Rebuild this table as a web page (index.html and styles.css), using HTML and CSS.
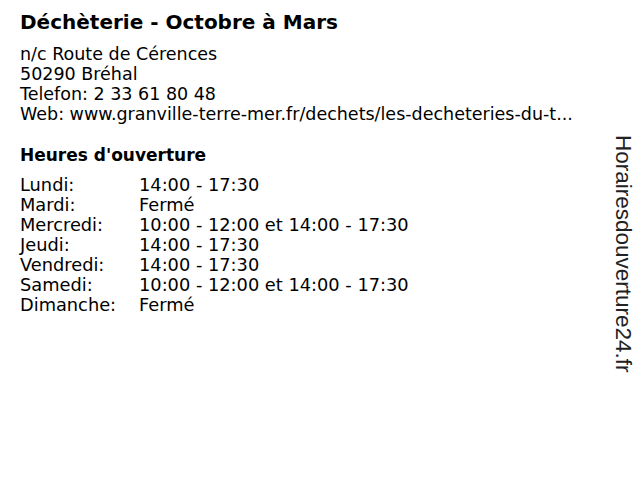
FILE: index.html
```html
<!DOCTYPE html>
<html>
<head>
<meta charset="utf-8">
<link rel="stylesheet" href="styles.css">
</head>
<body>
<div class="page">
  <h1 class="title">Déchèterie - Octobre à Mars</h1>
  <div class="address">
    <div>n/c Route de Cérences</div>
    <div>50290 Bréhal</div>
    <div>Telefon: 2 33 61 80 48</div>
    <div>Web: www.granville-terre-mer.fr/dechets/les-decheteries-du-t...</div>
  </div>
  <h2 class="subtitle">Heures d'ouverture</h2>
  <div class="hours">
    <div class="day">Lundi:</div><div>14:00 - 17:30</div>
    <div class="day">Mardi:</div><div>Fermé</div>
    <div class="day">Mercredi:</div><div>10:00 - 12:00 et 14:00 - 17:30</div>
    <div class="day">Jeudi:</div><div>14:00 - 17:30</div>
    <div class="day">Vendredi:</div><div>14:00 - 17:30</div>
    <div class="day">Samedi:</div><div>10:00 - 12:00 et 14:00 - 17:30</div>
    <div class="day">Dimanche:</div><div>Fermé</div>
  </div>
</div>
<div class="brand">Horairesdouverture24.fr</div>
</body>
</html>
```
FILE: styles.css
```css
html, body {
  margin: 0;
  padding: 0;
  background: #fff;
}
body {
  font-family: "DejaVu Sans", Verdana, sans-serif;
  color: #000;
  width: 640px;
  height: 480px;
  position: relative;
  overflow: hidden;
}
.page {
  padding: 10px 20px 0 20px;
}
.title {
  font-size: 20px;
  font-weight: bold;
  margin: 0;
  line-height: 24px;
}
.address {
  margin-top: 10px;
  font-size: 17.5px;
  line-height: 20px;
}
.subtitle {
  font-size: 17px;
  font-weight: bold;
  margin: 21px 0 0 0;
  line-height: 20px;
}
.hours {
  margin-top: 10px;
  display: grid;
  grid-template-columns: 119px auto;
  font-size: 17.8px;
  line-height: 20px;
}
.brand {
  position: absolute;
  top: 135px;
  left: 611px;
  writing-mode: vertical-rl;
  font-family: "Liberation Sans", Arial, sans-serif;
  font-size: 22.5px;
  line-height: 24px;
  color: #222;
}
```
